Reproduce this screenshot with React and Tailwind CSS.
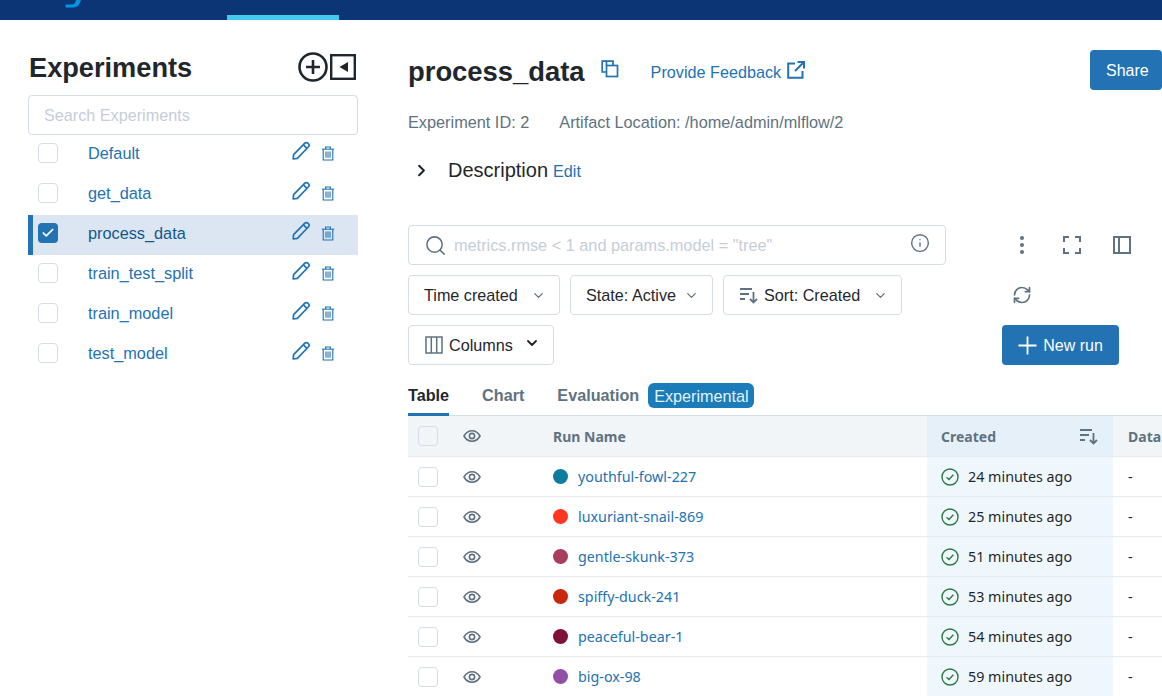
import React from "react";
import { ChevronDown, ChevronRight, Search, Info, RefreshCw, Check } from "lucide-react";

const experiments = ["Default", "get_data", "process_data", "train_test_split", "train_model", "test_model"];

const runs = [
  { name: "youthful-fowl-227", color: "bg-[#0e7c9e]", time: "24 minutes ago" },
  { name: "luxuriant-snail-869", color: "bg-[#ff3621]", time: "25 minutes ago" },
  { name: "gentle-skunk-373", color: "bg-[#a83d5c]", time: "51 minutes ago" },
  { name: "spiffy-duck-241", color: "bg-[#c9260c]", time: "53 minutes ago" },
  { name: "peaceful-bear-1", color: "bg-[#7f1239]", time: "54 minutes ago" },
  { name: "big-ox-98", color: "bg-[#9150a5]", time: "59 minutes ago" },
];

const PencilIcon = () => (
  <svg width="20" height="20" viewBox="0 0 20 20" fill="none" stroke="#2272b4" strokeWidth="1.7" strokeLinejoin="round">
    <path d="M2.2 18 L2.6 13.6 L13.6 2.4 C14.6 1.4 16 1.3 17.2 2.4 C18.3 3.5 18.3 4.9 17.3 6 L6.4 17.4 Z" />
    <path d="M12.4 3.8 L16 7.4" />
  </svg>
);

const TrashIcon = () => (
  <svg width="14" height="15" viewBox="0 0 14 15" fill="none" stroke="#2272b4" strokeWidth="1.1">
    <path d="M0.8 3.2 H13.2" />
    <path d="M4.6 3 V1 H9.4 V3" />
    <path d="M2.2 3.2 V14 H11.8 V3.2" />
    <path d="M5 5.5 V11.8 M7 5.5 V11.8 M9 5.5 V11.8" />
  </svg>
);

const SortIcon = () => (
  <svg width="20" height="20" viewBox="0 0 20 20" fill="none" stroke="#5f7281" strokeWidth="1.8">
    <path d="M1 4 H13 M1 9 H10 M1 14 H6" />
    <path d="M14.5 7 V17.5 M11 14 L14.5 17.5 L18 14" />
  </svg>
);

const EyeIcon = () => (
  <svg width="18" height="18" viewBox="0 0 18 18" fill="none" stroke="#5f7281" strokeWidth="1.6">
    <path d="M1 9 C3 5.4 5.8 3.8 9 3.8 C12.2 3.8 15 5.4 17 9 C15 12.6 12.2 14.2 9 14.2 C5.8 14.2 3 12.6 1 9 Z" />
    <circle cx="9" cy="9" r="2.6" />
  </svg>
);

const CheckBox = ({ className = "bg-white" }) => (
  <span className={`block w-5 h-5 rounded border border-[#d5dde6] ${className}`} />
);

const DropButton = ({ width, children }) => (
  <button className={`${width} h-10 flex items-center justify-between pl-[15px] pr-[13px] border border-[#d5dde6] rounded text-[#1f272d] text-[16.2px]`}>
    {children}
  </button>
);

export default function App() {
  return (
    <div className="w-[1162px] h-[696px] overflow-hidden bg-white font-['Liberation_Sans',Arial,sans-serif]">
      <div className="h-5 bg-[#0b3574] flex">
        <div className="w-[65px]" />
        <svg width="16" height="8" viewBox="0 0 16 8" className="shrink-0">
          <path d="M11 0 H16 C15 3 13.5 7.5 8 7.5 H0.5 V4.5 H7.5 C9.5 4.5 10.5 2 11 0 Z" fill="#0194e2" />
        </svg>
        <div className="w-[146px]" />
        <div className="w-28 h-5 flex flex-col justify-end">
          <div className="h-[5px] bg-[#43c9ed]" />
        </div>
      </div>

      <div className="flex pl-7">
        <aside className="w-[330px] shrink-0 pt-[27px]">
          <div className="flex items-center justify-between h-10 pr-[2px]">
            <h1 className="text-[27.2px] font-bold text-[#1f272d] leading-10 pl-px pt-[2px]">Experiments</h1>
            <div className="flex items-center">
              <svg width="30" height="30" viewBox="0 0 30 30" fill="none" stroke="#1f272d" strokeWidth="2.6">
                <circle cx="15" cy="15" r="13.5" />
                <path d="M15 8 V22 M8 15 H22" />
              </svg>
              <svg width="26" height="26" viewBox="0 0 26 26" className="ml-[2px]">
                <rect x="1.2" y="1.2" width="23.6" height="23.6" fill="none" stroke="#1f272d" strokeWidth="2.4" />
                <path d="M18 8 V18 L9.5 13 Z" fill="#1f272d" />
              </svg>
            </div>
          </div>
          <div className="mt-2 h-10 border border-[#d5dde6] rounded flex items-center px-[15px] text-[16.2px] text-[#c4ced9]">
            Search Experiments
          </div>
          <ul>
            {experiments.map((name) => {
              const active = name === "process_data";
              return (
                <li key={name} className={`relative h-10 flex items-center pl-[10px] pr-[23px] pb-1 ${active ? "bg-[#dbe6f2]" : ""}`}>
                  {active && <span className="absolute left-0 top-0 bottom-0 w-[5px] bg-[#2272b4]" />}
                  {active ? (
                    <span className="flex items-center justify-center w-5 h-5 rounded bg-[#2272b4] text-white">
                      <Check size={14} strokeWidth={3} />
                    </span>
                  ) : (
                    <CheckBox />
                  )}
                  <span className={`ml-[30px] flex-1 text-[16.3px] ${active ? "text-[#14568a]" : "text-[#2272b4]"}`}>{name}</span>
                  <span className="pb-1"><PencilIcon /></span>
                  <span className="ml-[10px]"><TrashIcon /></span>
                </li>
              );
            })}
          </ul>
        </aside>

        <main className="ml-[50px] w-[754px] shrink-0">
          <div className="flex items-center h-10 mt-[30px]">
            <h2 className="text-[27.4px] font-bold text-[#1f272d] leading-10 pt-1">process_data</h2>
            <svg width="18" height="18" viewBox="0 0 18 18" fill="none" stroke="#2272b4" strokeWidth="1.7" className="ml-4 mb-[2px]">
              <path d="M5.5 5.5 V1.2 H12 V5.5" />
              <path d="M5.5 12 H1.2 V1.2 H5.5" />
              <rect x="5.5" y="5.5" width="11" height="11" />
            </svg>
            <span className="ml-[32px] text-[16.2px] text-[#2272b4] pt-1">Provide Feedback</span>
            <svg width="18" height="18" viewBox="0 0 18 18" fill="none" stroke="#2272b4" strokeWidth="2" className="ml-[6px] mb-[1px]">
              <path d="M8 2.5 H1.2 V16.8 H15.5 V10" />
              <path d="M10.5 1 H17 V7.5 M17 1 L8 10" />
            </svg>
            <button className="ml-auto w-[72px] h-10 pt-[2px] bg-[#2272b4] text-white text-base rounded text-left pl-4">Share</button>
          </div>
          <div className="mt-[22px] h-5 flex items-center text-[16.3px] text-[#5f7281]">
            <span>Experiment ID: 2</span>
            <span className="ml-[30px]">Artifact Location: /home/admin/mlflow/2</span>
          </div>
          <div className="mt-[18px] h-10 flex items-center text-[#1f272d]">
            <ChevronRight size={19} strokeWidth={2.6} className="ml-1" />
            <span className="ml-[17px] text-xl pb-px">Description</span>
            <span className="ml-[5px] pt-[3px] text-[16.2px] text-[#2272b4]">Edit</span>
          </div>

          <div className="mt-[35px] flex h-10">
            <div className="w-[538px] h-10 border border-[#d5dde6] rounded flex items-center pl-[15px] pr-[15px]">
              <Search size={23} strokeWidth={1.6} className="text-[#5f7281]" />
              <span className="ml-[7px] flex-1 text-[16.3px] text-[#c4ced9]">metrics.rmse &lt; 1 and params.model = "tree"</span>
              <Info size={20} strokeWidth={1.7} className="text-[#5f7281] -mt-1" />
            </div>
            <div className="flex items-center ml-[66px]">
              <svg width="20" height="20" viewBox="0 0 20 20" fill="#5f7281">
                <circle cx="10" cy="3" r="2" />
                <circle cx="10" cy="10" r="2" />
                <circle cx="10" cy="17" r="2" />
              </svg>
              <svg width="20" height="20" viewBox="0 0 20 20" fill="none" stroke="#5f7281" strokeWidth="2" className="ml-[30px]">
                <path d="M2 7 V2 H7 M13 2 H18 V7 M18 13 V18 H13 M7 18 H2 V13" />
              </svg>
              <svg width="20" height="20" viewBox="0 0 20 20" fill="none" stroke="#5f7281" strokeWidth="2" className="ml-[30px]">
                <rect x="2" y="2" width="16" height="16" />
                <path d="M7 2 V18" />
              </svg>
            </div>
          </div>

          <div className="mt-[10px] flex h-10 items-center">
            <div className="flex w-[604px] gap-[10px]">
              <DropButton width="w-[152px]">
                Time created <ChevronDown size={15} strokeWidth={2} className="text-[#5f7281]" />
              </DropButton>
              <DropButton width="w-[143px]">
                State: Active <ChevronDown size={15} strokeWidth={2} className="text-[#5f7281]" />
              </DropButton>
              <DropButton width="w-[179px]">
                <span className="flex items-center gap-[5px]"><SortIcon />Sort: Created</span>
                <ChevronDown size={15} strokeWidth={2} className="text-[#5f7281]" />
              </DropButton>
            </div>
            <RefreshCw size={20} strokeWidth={2} className="text-[#5f7281]" />
          </div>

          <div className="mt-[10px] flex h-10">
            <div className="w-[594px]">
              <DropButton width="w-[146px]">
                <span className="flex items-center gap-[6px] pl-px">
                  <svg width="18" height="18" viewBox="0 0 18 18" fill="none" stroke="#5f7281" strokeWidth="1.5">
                    <rect x="1" y="1" width="16" height="16" />
                    <path d="M6.3 1 V17 M11.7 1 V17" />
                  </svg>
                  Columns
                </span>
                <ChevronDown size={16} strokeWidth={2.8} className="text-[#1f272d] mb-1" />
              </DropButton>
            </div>
            <button className="w-[117px] h-10 flex items-center justify-center gap-[6px] pt-[2px] bg-[#2272b4] rounded text-white text-base">
              <svg width="19" height="19" viewBox="0 0 19 19" stroke="currentColor" strokeWidth="1.8" className="-mt-[2px]">
                <path d="M9.5 0.5 V18.5 M0.5 9.5 H18.5" />
              </svg>
              New run
            </button>
          </div>

          <div className="mt-[10px] h-[41px] flex items-end border-b border-[#d5dde6] font-bold text-[16.2px] text-[#5f7281]">
            <span className="h-[41px] pt-[2px] flex items-center border-b-[3px] border-[#2272b4] text-[#1f272d] -mb-px">Table</span>
            <span className="h-[41px] flex items-center ml-[33px] -mb-px">Chart</span>
            <span className="h-[41px] flex items-center ml-[33px] -mb-px">Evaluation</span>
            <span className="h-[25px] self-start mt-[8px] ml-[9px] pl-[6px] pr-[5px] pt-px flex items-center bg-[#1a7cb8] text-[#e3f1fa] font-normal rounded-md">Experimental</span>
          </div>

          <div className="font-['Noto_Sans',sans-serif] text-[14.3px]">
            <div className="grid grid-cols-[145px_374px_186px_1fr] h-[41px] items-center bg-[#f1f5f8] border-b border-[#e6ebf0] font-bold text-[14px] text-[#5f7281]">
              <div className="flex items-center pl-[10px]">
                <CheckBox className="bg-[#f1f5f8]" />
                <span className="ml-[25px] block"><EyeIcon /></span>
              </div>
              <div>Run Name</div>
              <div className="h-full flex items-center justify-between pl-[14px] pr-[14px] bg-[#e6f0f9]">
                <span>Created</span> <SortIcon />
              </div>
              <div className="pl-[15px]">Data</div>
            </div>
            {runs.map((run) => (
              <div key={run.name} className="grid grid-cols-[145px_374px_186px_1fr] h-10 items-center border-b border-[#e6ebf0] text-[#1f272d]">
                <div className="flex items-center pl-[10px]">
                  <CheckBox />
                  <span className="ml-[25px] block"><EyeIcon /></span>
                </div>
                <div className="flex items-center">
                  <span className={`w-[15px] h-[15px] rounded-full ${run.color}`} />
                  <span className="ml-[10px] text-[#2272b4]">{run.name}</span>
                </div>
                <div className="h-full flex items-center pl-[14px] bg-[#f0f7fc]">
                  <svg width="18" height="18" viewBox="0 0 18 18" fill="none" stroke="#277c43" strokeWidth="1.4">
                    <circle cx="9" cy="9" r="8" />
                    <path d="M5.6 9.3 L8 11.5 L12.4 6.8" />
                  </svg>
                  <span className="ml-[9px]">{run.time}</span>
                </div>
                <div className="pl-[15px]">-</div>
              </div>
            ))}
          </div>
        </main>
      </div>
    </div>
  );
}
